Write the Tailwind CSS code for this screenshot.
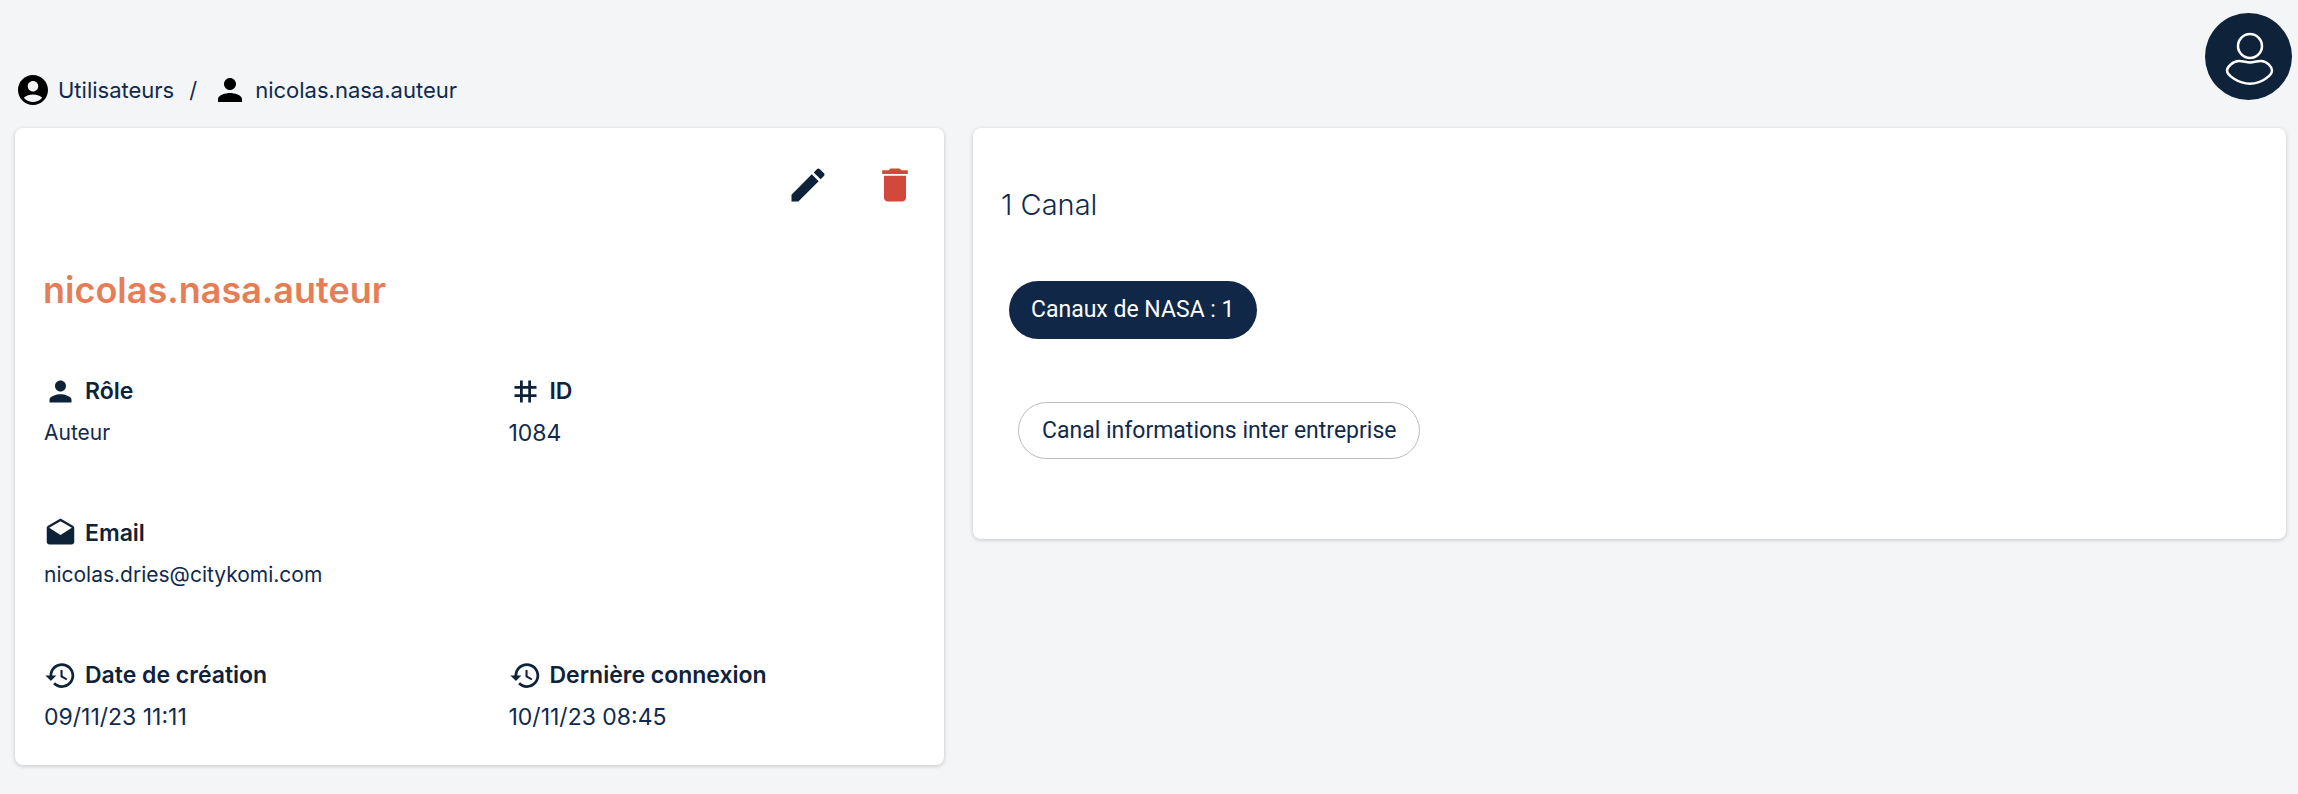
<!DOCTYPE html>
<html lang="fr">
<head>
<meta charset="utf-8">
<title>nicolas.nasa.auteur</title>
<script src="https://cdn.jsdelivr.net/npm/@tailwindcss/browser@4"></script>
</head>
<body class="min-h-screen bg-[#f4f5f7] font-['Inter',sans-serif] text-[22px] text-[#102a4e]">
<svg class="hidden" aria-hidden="true">
  <symbol id="person" viewBox="0 0 24 24"><path d="M12 12c2.21 0 4-1.79 4-4s-1.79-4-4-4-4 1.79-4 4 1.79 4 4 4zm0 2c-2.67 0-8 1.34-8 4v2h16v-2c0-2.66-5.33-4-8-4z"/></symbol>
  <symbol id="history" viewBox="0 0 24 24"><path d="M13 3c-4.97 0-9 4.03-9 9H1l3.89 3.89.07.14L9 12H6c0-3.87 3.13-7 7-7s7 3.13 7 7-3.13 7-7 7c-1.93 0-3.68-.79-4.94-2.06l-1.42 1.42C8.27 19.99 10.51 21 13 21c4.97 0 9-4.03 9-9s-4.03-9-9-9zm-1 5v5l4.28 2.54.72-1.21-3.5-2.08V8H12z"/></symbol>
</svg>

<header class="flex justify-between pt-[13px] pr-[6px] pb-5 pl-[15px]">
  <nav aria-label="Fil d'Ariane" class="flex items-center gap-[15px] self-end leading-9">
    <a href="#" class="flex items-center gap-[7px]">
      <svg class="size-9 fill-black" viewBox="0 0 24 24"><path d="M12 2C6.48 2 2 6.48 2 12s4.48 10 10 10 10-4.48 10-10S17.52 2 12 2zm0 4c1.93 0 3.5 1.57 3.5 3.5S13.93 13 12 13s-3.5-1.57-3.5-3.5S10.07 6 12 6zm0 14c-2.03 0-4.43-.82-6.14-2.88C7.55 15.8 9.68 15 12 15s4.45.8 6.14 2.12C16.43 19.18 14.03 20 12 20z"/></svg>
      Utilisateurs
    </a>
    <span>/</span>
    <a href="#" class="flex items-center gap-[7px]">
      <svg class="size-9 fill-black"><use href="#person"/></svg>
      nicolas.nasa.auteur
    </a>
  </nav>
  <button aria-label="Mon compte" class="mb-2 flex size-[87px] items-center justify-center rounded-full bg-[#0e2239]">
    <svg class="size-14 fill-none stroke-white stroke-[2.5]" viewBox="0 0 56 56"><circle cx="29" cy="17" r="12"/><path d="M29 33.5C24 33 22.500 32 18 32C12 32 6 38 6 41.500C6 46 17 54.700 29 54.700C41 54.700 51 46 51 41.500C51 38 46 32 40 32C35.500 32 34 33 29 33.500Z" stroke-linejoin="round"/></svg>
  </button>
</header>

<main class="grid grid-cols-[929fr_1313fr] items-start gap-[29px] pr-3 pb-7 pl-[15px]">
  <section class="rounded-lg bg-white pt-[35px] pb-7 shadow-[0_1px_4px_rgba(0,0,0,0.2)]">
    <div class="flex justify-end gap-[43px] px-[27px]">
      <button aria-label="Modifier"><svg class="size-11 fill-[#0e2239]" viewBox="0 0 24 24"><path d="M3 17.25V21h3.75L17.81 9.94l-3.75-3.75L3 17.25zM20.71 7.04c.39-.39.39-1.02 0-1.41l-2.34-2.34c-.39-.39-1.02-.39-1.41 0l-1.83 1.83 3.75 3.75 1.83-1.83z"/></svg></button>
      <button aria-label="Supprimer"><svg class="size-11 fill-[#d2483c]" viewBox="0 0 24 24"><path d="M6 19c0 1.1.9 2 2 2h8c1.1 0 2-.9 2-2V7H6v12zM19 4h-3.5l-1-1h-5l-1 1H5v2h14V4z"/></svg></button>
    </div>
    <h1 class="mt-[59px] px-7 text-[36px] leading-12 font-semibold text-[#e57e56]">nicolas.nasa.auteur</h1>
    <dl class="mt-[55px] grid grid-cols-2 gap-y-[58px]">
      <div class="px-[29px]">
        <dt class="flex items-center gap-2 text-[23px] leading-11 font-semibold text-[#0e2239]"><svg class="size-[33px] fill-current"><use href="#person"/></svg>Rôle</dt>
        <dd class="text-[21px] leading-10">Auteur</dd>
      </div>
      <div class="px-[29px]">
        <dt class="flex items-center gap-2 text-[23px] leading-11 font-semibold text-[#0e2239]"><svg class="size-[33px] fill-current" viewBox="0 0 24 24"><path d="M20 10V8h-4V4h-2v4h-4V4H8v4H4v2h4v4H4v2h4v4h2v-4h4v4h2v-4h4v-2h-4v-4h4zm-6 4h-4v-4h4v4z"/></svg>ID</dt>
        <dd class="text-[23px] leading-10">1084</dd>
      </div>
      <div class="col-span-2 px-[29px]">
        <dt class="flex items-center gap-2 text-[23px] leading-11 font-semibold text-[#0e2239]"><svg class="size-[33px] fill-current" viewBox="0 0 24 24"><path d="M21.99 8c0-.72-.37-1.35-.94-1.7L12 1 2.95 6.3C2.38 6.65 2 7.28 2 8v10c0 1.1.9 2 2 2h16c1.1 0 2-.9 2-2l-.01-10zM12 13L3.74 7.84 12 3l8.26 4.84L12 13z"/></svg>Email</dt>
        <dd class="text-[21px] leading-10">nicolas.dries@citykomi.com</dd>
      </div>
      <div class="px-[29px]">
        <dt class="flex items-center gap-2 text-[23px] leading-11 font-semibold text-[#0e2239]"><svg class="size-[33px] fill-current"><use href="#history"/></svg>Date de création</dt>
        <dd class="text-[23px] leading-10">09/11/23 11:11</dd>
      </div>
      <div class="px-[29px]">
        <dt class="flex items-center gap-2 text-[23px] leading-11 font-semibold text-[#0e2239]"><svg class="size-[33px] fill-current"><use href="#history"/></svg>Dernière connexion</dt>
        <dd class="text-[23px] leading-10">10/11/23 08:45</dd>
      </div>
    </dl>
  </section>

  <section class="flex flex-col items-start rounded-lg bg-white px-7 pt-[57px] pb-20 shadow-[0_1px_4px_rgba(0,0,0,0.2)]">
    <h2 class="text-[29px] leading-10 font-light">1 Canal</h2>
    <button class="mt-14 ml-2 rounded-full bg-[#102747] px-[22px] font-['Roboto',sans-serif] text-[23px] leading-[58px] text-white">Canaux de NASA : 1</button>
    <button class="mt-[63px] ml-[17px] rounded-full border border-[#bdbdbd] px-[23px] font-['Roboto',sans-serif] text-[23px] leading-[55px]">Canal informations inter entreprise</button>
  </section>
</main>
</body>
</html>
